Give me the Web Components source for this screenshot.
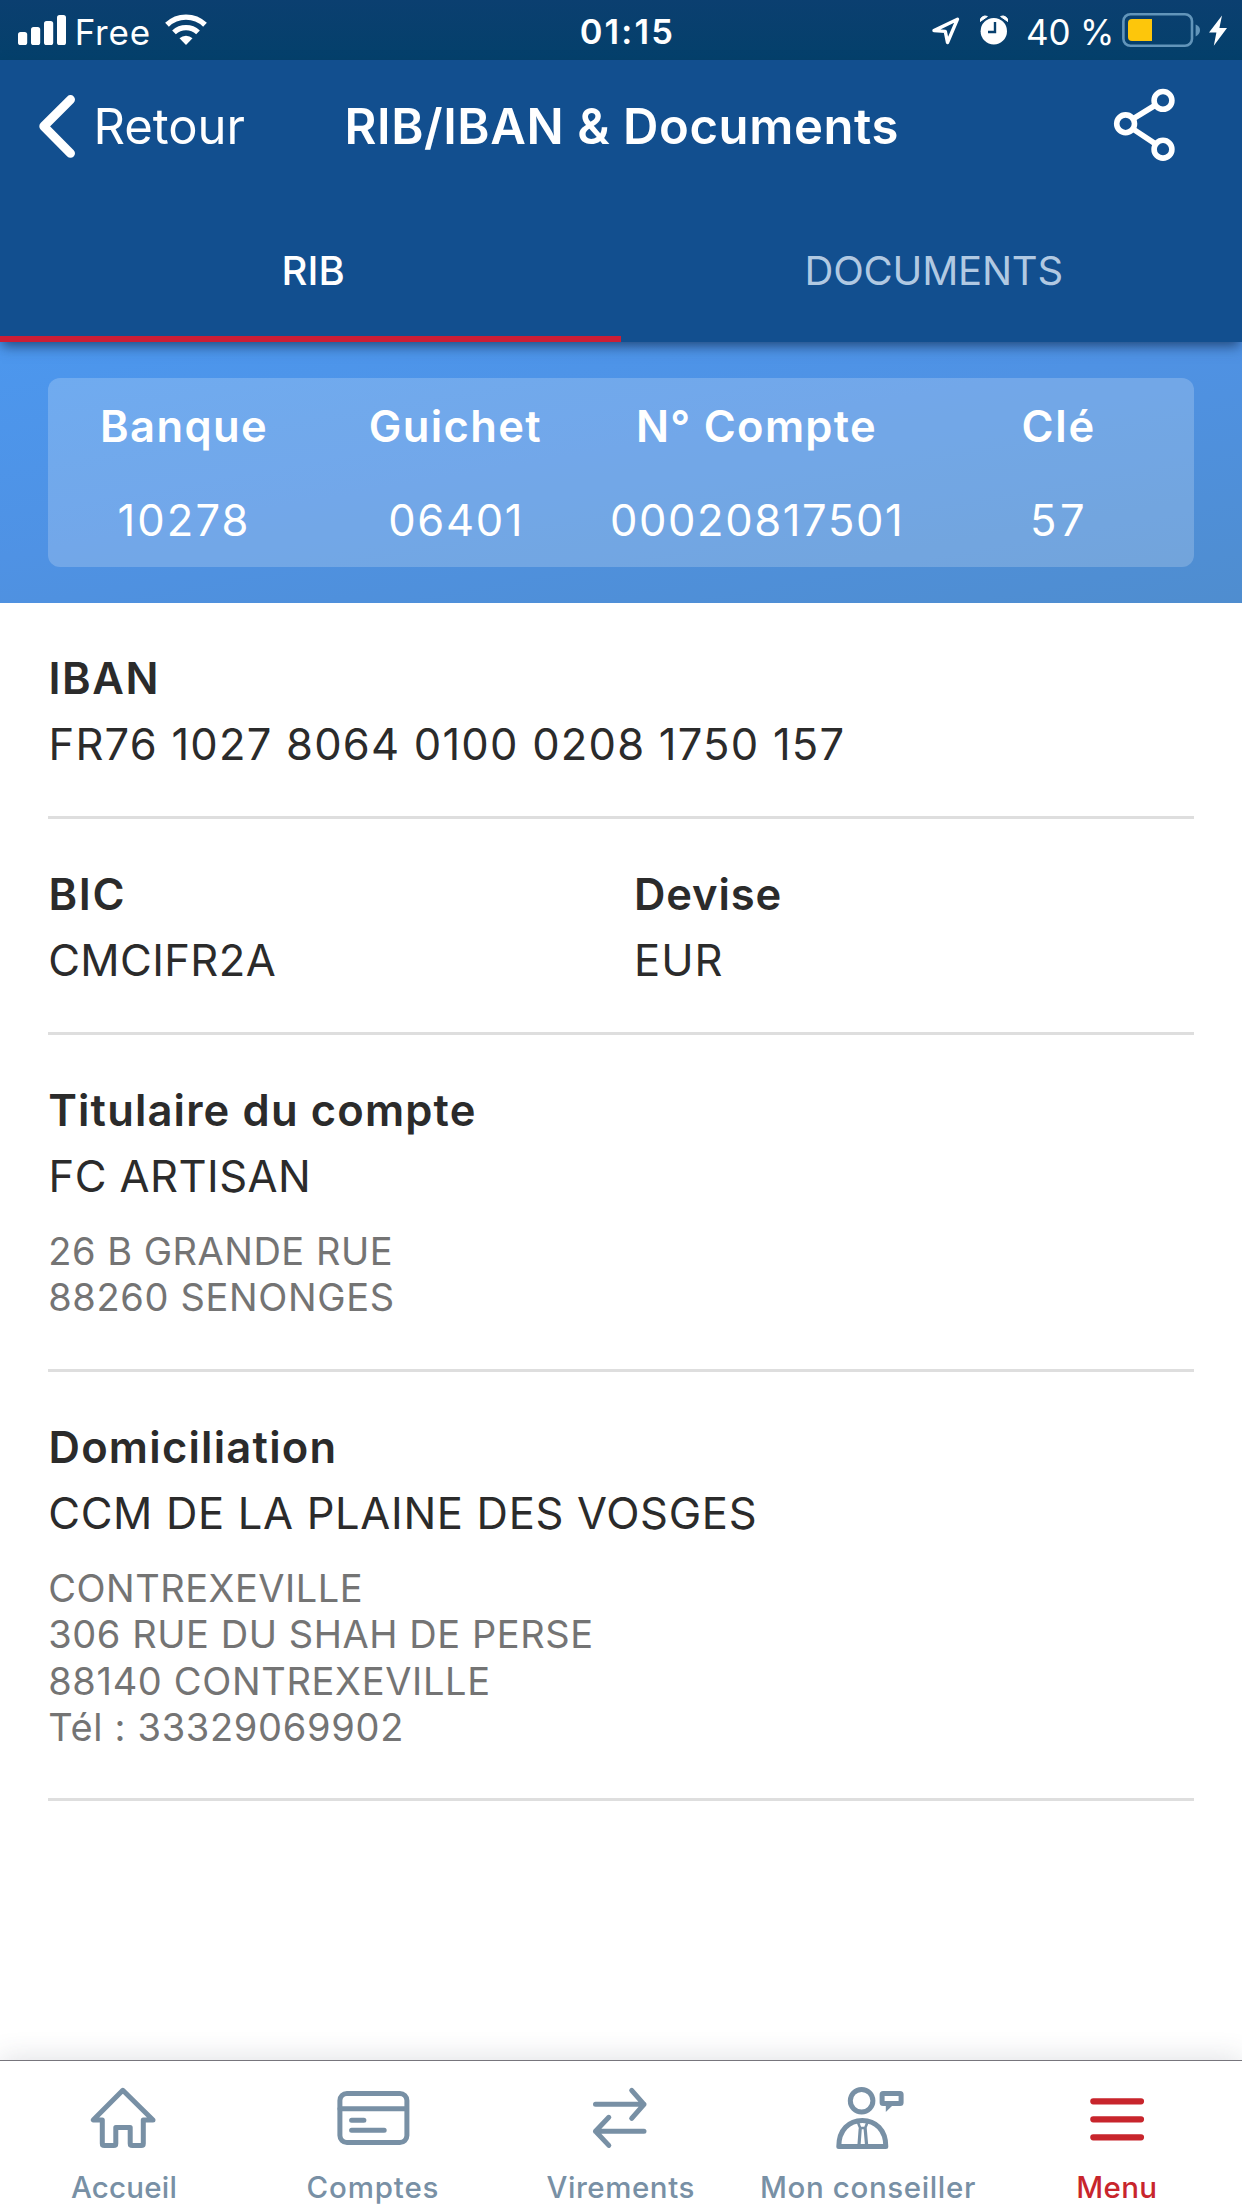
<!DOCTYPE html>
<html lang="fr">
<head>
<meta charset="utf-8">
<title>RIB/IBAN &amp; Documents</title>
<style>
html,body{margin:0;padding:0;background:#fff}
body{width:1242px;height:2208px;overflow:hidden;font-family:Inter,"Liberation Sans",sans-serif;font-optical-sizing:none}
</style>
</head>
<body>
<rib-screen></rib-screen>
<script>
function define(name, html, setup){
  const tpl=document.createElement('template');
  tpl.innerHTML=html;
  customElements.define(name, class extends HTMLElement{
    connectedCallback(){
      if(this.shadowRoot) return;
      this.attachShadow({mode:'open'}).appendChild(tpl.content.cloneNode(true));
      if(setup) setup.call(this,this.shadowRoot);
    }
  });
}

/* Optically aligned text: the box hugs the ink, tracking is set from the "ink" width. */
const ctx=document.createElement('canvas').getContext('2d');
define('ink-text', `<style>
:host{display:block;white-space:pre;line-height:48px;width:max-content}
span{display:block;width:max-content}
</style><span><slot></slot></span>`, function(root){
  const size=+this.getAttribute('size'), weight=this.getAttribute('weight')||400, ink=+this.getAttribute('ink');
  const text=this.textContent, s=root.querySelector('span');
  ctx.font=weight+' '+size+'px Inter, "Liberation Sans", sans-serif';
  const m=ctx.measureText(text), left=-m.actualBoundingBoxLeft, right=m.width-m.actualBoundingBoxRight;
  const base='font-size:'+size+'px;font-weight:'+weight+';';
  s.style.cssText=base+'letter-spacing:0.001px';
  const full=s.getBoundingClientRect().width||m.width;
  const track=(ink-(full-left-right))/(text.length-1);
  s.style.cssText=base+'letter-spacing:'+track.toFixed(3)+'px;margin-left:'+(-left).toFixed(2)+'px;margin-right:'+(-right-track).toFixed(2)+'px';
});

define('status-bar', `<style>
:host{display:grid;grid-template-columns:1fr auto 1fr;height:60px;box-sizing:border-box;padding:0 15px 0 18px;color:#fff;background:linear-gradient(#0b3f70,#04406b)}
div{display:flex;align-items:center}
.r{justify-content:flex-end}
ink-text{margin-top:3px}
svg{display:block;height:60px}
</style>
<div>
<svg width="48" viewBox="18 0 48 60" fill="#fff"><rect x="18" y="32" width="9.2" height="13" rx="2.6"/><rect x="31" y="27" width="9.2" height="18" rx="2.6"/><rect x="44" y="21" width="9.2" height="24" rx="2.6"/><rect x="57" y="15" width="9" height="30" rx="2.6"/></svg>
<ink-text size="35" weight="400" ink="71" style="margin-left:11.7px">Free</ink-text>
<svg width="42" viewBox="165 0 42 60" style="margin-left:16.3px" fill="none" stroke="#fff" stroke-width="5.4"><path d="M167 24.7a27.5 27.5 0 0 1 38 0"/><path d="M174 32.4a17.5 17.5 0 0 1 24 0"/><path d="M179.5 38.2a9.5 9.5 0 0 1 13 0L186 45Z" fill="#fff" stroke="none"/></svg>
</div>
<div><ink-text size="34.5" weight="600" ink="90.7" style="margin-left:7px">01:15</ink-text></div>
<div class="r">
<svg width="28" viewBox="931.5 0 28 60" fill="none" stroke="#fff" stroke-width="3.4" stroke-linejoin="round"><path d="M933.5 30.6 957 19.2 947 42.5 944.8 31.4Z"/></svg>
<svg width="28" viewBox="980 0 28 60" style="margin-left:20px"><circle cx="993.8" cy="31.2" r="13.2" fill="#fff"/><path d="M980.2 21.5a5 5 0 0 1 7.2-5ZM1007.8 21.5a5 5 0 0 0-7.2-5Z" fill="#fff" stroke="#fff" stroke-width="1"/><path d="M995 22V32H988" fill="none" stroke="#08406e" stroke-width="2.4"/></svg>
<ink-text size="35" weight="400" ink="83" style="margin-left:20px">40 %</ink-text>
<svg width="78" viewBox="1122 0 78 60" style="margin-left:11px"><rect x="1123.4" y="14.2" width="68.6" height="31.6" rx="7" fill="none" stroke="#6295ba" stroke-width="2.6"/><path d="M1152 19V41H1132a4 4 0 0 1-4-4V23a4 4 0 0 1 4-4Z" fill="#fdc60b"/><path d="M1195.6 24.5Q1200 26 1200 30T1195.6 36.5Z" fill="#6295ba"/></svg>
<svg width="18" viewBox="1209 0 18 60" style="margin-left:9px"><path d="M1222 15.5 1209 32.5H1216.4L1213.8 45.7 1227 28H1219.4Z" fill="#fff"/></svg>
</div>`);

define('nav-bar', `<style>
:host{display:flex;align-items:center;height:132px;box-sizing:border-box;padding:0 67px 0 38px;color:#fff}
ink-text{padding-top:2px}
svg{display:block}
.share{margin-left:auto}
</style>
<svg width="38" height="72" viewBox="38 90 38 72" fill="none" stroke="#fff" stroke-width="9" stroke-linecap="round" stroke-linejoin="round"><path d="M70.5 99.6 43.8 126.3 70.5 153.3"/></svg>
<ink-text size="49" ink="147" style="margin-left:21.5px">Retour</ink-text>
<ink-text size="49" weight="600" ink="549" style="margin-left:103px">RIB/IBAN &amp; Documents</ink-text>
<svg class="share" width="62" height="76" viewBox="1113 88 62 76" fill="none" stroke="#fff" stroke-width="5.6"><circle cx="1163" cy="100.4" r="8.9"/><circle cx="1125.6" cy="123.8" r="8.9"/><circle cx="1163" cy="149.2" r="8.9"/><path d="M1133 118.8 1155.6 105M1133 129 1155.8 144.2"/></svg>`);

define('tab-item', `<style>
:host{display:flex;flex-direction:column;align-items:center;justify-content:center;flex:1;height:150px;padding-top:8px;box-sizing:border-box;color:#b1c9e2;position:relative}
:host([active]){color:#fff}
i{display:none;position:absolute;left:0;right:0;bottom:0;height:6px;background:#cc1e35}
:host([active]) i{display:block}
</style><slot></slot><i></i>`);

define('app-header', `<style>
:host{display:block;position:relative;background:#124f8f;box-shadow:0 6px 12px -2px rgba(20,50,90,.75)}
.tabs{display:flex}
</style><nav-bar></nav-bar><div class="tabs"><tab-item active><ink-text size="40" weight="500" ink="59" style="margin-left:7px">RIB</ink-text></tab-item><tab-item><ink-text size="40" ink="254" style="margin-left:6px">DOCUMENTS</ink-text></tab-item></div>`);

define('rib-field', `<style>
:host{display:flex;flex-direction:column;align-items:center;gap:46px}
</style><slot></slot>`);

define('rib-card', `<style>
:host{display:block;height:261px;box-sizing:border-box;padding:36px 48px;color:#fff;background:linear-gradient(170deg,#4c97ee 0%,#4f92e4 45%,#4f8dcf 100%)}
.card{display:grid;grid-template-columns:272px 271px 331px 272px;height:189px;box-sizing:border-box;padding-top:24px;border-radius:12px;background:rgba(255,255,255,.2)}
</style>
<div class="card">
<rib-field><ink-text size="43.5" weight="600" ink="162">Banque</ink-text><ink-text size="43.5" ink="127" style="margin-right:2px">10278</ink-text></rib-field>
<rib-field><ink-text size="43.5" weight="600" ink="169.5">Guichet</ink-text><ink-text size="43.5" ink="128.5" style="margin-right:2px">06401</ink-text></rib-field>
<rib-field><ink-text size="43.5" weight="600" ink="235">N° Compte</ink-text><ink-text size="43.5" ink="287" style="margin-right:2px">00020817501</ink-text></rib-field>
<rib-field><ink-text size="43.5" weight="600" ink="69">Clé</ink-text><ink-text size="43.5" ink="50">57</ink-text></rib-field>
</div>`);

define('info-section', `<style>
:host{display:flex;margin:0 48px;padding:51px 0 48px;border-bottom:3px solid #dedede;color:#2b2b2b}
</style><slot></slot>`);
define('info-block', `<style>
:host{display:flex;flex-direction:column;gap:18px;padding-left:3.5px}
::slotted(.round){margin-left:-1.3px}
</style><slot></slot>`);
define('address-lines', `<style>
:host{display:flex;flex-direction:column;margin:10px 0 0 -1.3px;color:#747474}
::slotted(*){line-height:46.4px}
</style><slot></slot>`);

define('menu-item', `<style>
:host{display:flex;flex-direction:column;align-items:center;flex:1;color:#7890a5}
:host([active]){color:#c8252c}
::slotted(svg){display:block;flex:none;margin:21px 0 15px;fill:none;stroke:currentColor;stroke-width:5;stroke-linecap:round;stroke-linejoin:round}
::slotted(ink-text){line-height:36px}
</style><slot></slot>`);

define('bottom-bar', `<style>
:host{display:flex;height:148px;box-sizing:border-box;border-top:1px solid #77757c;background:#fff;box-shadow:0 -2px 26px rgba(60,70,90,.16)}
</style>
<menu-item><svg width="90" height="72" viewBox="0 0 90 72"><path d="M43.8 8.3 14.2 38H23.3V61.5Q23.3 63.6 25.4 63.6H34.7Q36.8 63.6 36.8 61.5V45.4H51.2V61.5Q51.2 63.6 53.3 63.6H62.2Q64.3 63.6 64.3 61.5V38H74Z"/></svg><ink-text size="29.5" weight="450" ink="104.5" style="margin-right:2px">Accueil</ink-text></menu-item>
<menu-item><svg width="90" height="72" viewBox="0 0 90 72"><rect x="11.9" y="11.5" width="67" height="49" rx="7"/><path d="M12 26.7H78"/><path d="M23.6 38.3H35.9M23.6 48.3H56.2"/></svg><ink-text size="29.5" weight="450" ink="130">Comptes</ink-text></menu-item>
<menu-item><svg width="90" height="72" viewBox="0 0 90 72"><path d="M19.5 22.3H68M55.7 8.4 68 22.3 55.7 36.4M68 49.3H19.5M32.8 35.3 19.5 49.3 32.8 63.4"/></svg><ink-text size="29.5" weight="450" ink="147" style="margin-right:2px">Virements</ink-text></menu-item>
<menu-item><svg width="90" height="72" viewBox="0 0 90 72"><circle cx="37.6" cy="18.7" r="11.3"/><path d="M14.8 64.4C14.8 48 25 38.5 38.3 38.5S61.8 48 61.8 64.4Z"/><path d="M36.2 47 35 63M41.2 47 42.6 63" stroke-width="3.2"/><path d="M34 40.5 36.2 46H41.2L43.4 40.5" stroke-width="2.6"/><rect x="58.1" y="11.5" width="19" height="10" rx="1"/><path d="M61.8 23V30L69 23Z" fill="currentColor" stroke="none"/></svg><ink-text size="29.5" weight="450" ink="213" style="margin-right:2px">Mon conseiller</ink-text></menu-item>
<menu-item active><svg width="90" height="72" viewBox="0 0 90 72"><path d="M20.3 19.3H68M20.3 37.3H68M20.3 55.3H68" stroke-width="6.2"/></svg><ink-text size="29.5" weight="500" ink="77" style="margin-right:2px">Menu</ink-text></menu-item>`);

define('rib-screen', `<style>
:host{display:flex;flex-direction:column;width:1242px;height:2208px;background:#fff}
main{flex:1}
bottom-bar{flex:none}
</style>
<status-bar></status-bar>
<app-header></app-header>
<main>
<rib-card></rib-card>
<info-section><info-block><ink-text size="43.5" weight="600" ink="104">IBAN</ink-text><ink-text size="43.5" ink="791">FR76 1027 8064 0100 0208 1750 157</ink-text></info-block></info-section>
<info-section><info-block style="width:582px"><ink-text size="43.5" weight="600" ink="72">BIC</ink-text><ink-text class="round" size="43.5" ink="224.5">CMCIFR2A</ink-text></info-block><info-block><ink-text size="43.5" weight="600" ink="142.5">Devise</ink-text><ink-text size="43.5" ink="84.5">EUR</ink-text></info-block></info-section>
<info-section><info-block><ink-text class="round" size="43.5" weight="600" ink="424.5" style="margin-left:-2.3px">Titulaire du compte</ink-text><ink-text size="43.5" ink="255.5">FC ARTISAN</ink-text><address-lines><ink-text size="38" ink="340.5">26 B GRANDE RUE</ink-text><ink-text size="38" ink="342.5">88260 SENONGES</ink-text></address-lines></info-block></info-section>
<info-section><info-block><ink-text size="43.5" weight="600" ink="282">Domiciliation</ink-text><ink-text class="round" size="43.5" ink="704.5">CCM DE LA PLAINE DES VOSGES</ink-text><address-lines><ink-text size="38" ink="310.5">CONTREXEVILLE</ink-text><ink-text size="38" ink="541">306 RUE DU SHAH DE PERSE</ink-text><ink-text size="38" ink="438">88140 CONTREXEVILLE</ink-text><ink-text size="38" ink="352" style="margin-left:-1px">Tél : 33329069902</ink-text></address-lines></info-block></info-section>
</main>
<bottom-bar></bottom-bar>`);
</script>
</body>
</html>
